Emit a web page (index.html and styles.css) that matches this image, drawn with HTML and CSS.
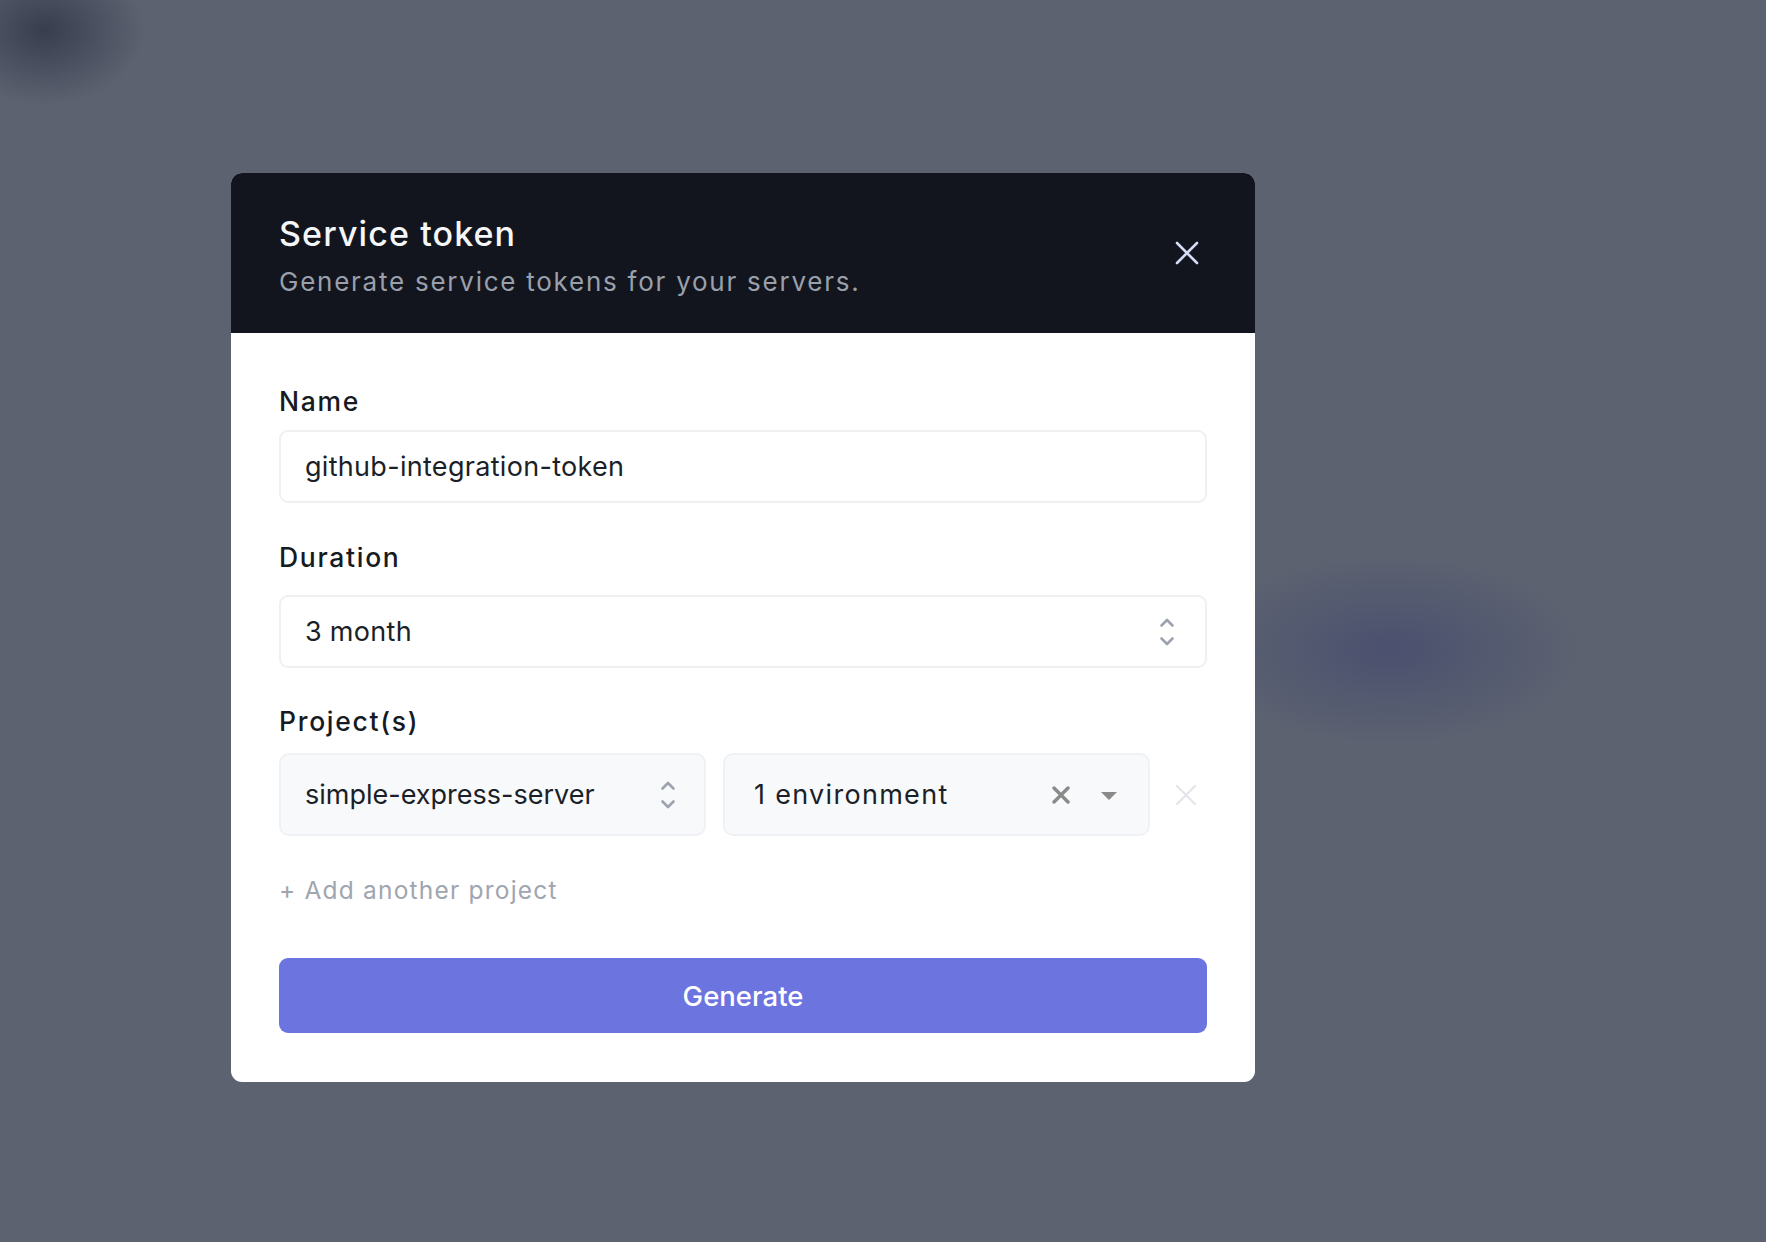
FILE: index.html
```html
<!DOCTYPE html>
<html lang="en">
<head>
<meta charset="utf-8">
<title>Service token</title>
<link rel="stylesheet" href="styles.css">
</head>
<body>
<div class="backdrop">
  <div class="modal">
    <header class="modal-header">
      <div class="header-text">
        <h1 class="title">Service token</h1>
        <p class="subtitle">Generate service tokens for your servers.</p>
      </div>
      <button class="close-btn" aria-label="Close">
        <svg width="26" height="26" viewBox="0 0 26 26"><path d="M3 3 L23 23 M23 3 L3 23" stroke="#d5dcf5" stroke-width="2.6" stroke-linecap="round"/></svg>
      </button>
    </header>
    <div class="modal-body">
      <div class="label label-name">Name</div>
      <div class="field field-name">github-integration-token</div>

      <div class="label label-duration">Duration</div>
      <div class="field field-duration">
        <span>3 month</span>
        <svg class="chev" width="16" height="30" viewBox="0 0 16 30"><path d="M2.5 8.5 L8 3 L13.5 8.5 M2.5 21.5 L8 27 L13.5 21.5" fill="none" stroke="#9ca3af" stroke-width="2.6" stroke-linecap="round" stroke-linejoin="round"/></svg>
      </div>

      <div class="label label-projects">Project(s)</div>
      <div class="project-row">
        <div class="pselect">
          <span>simple-express-server</span>
          <svg class="chev" width="16" height="30" viewBox="0 0 16 30"><path d="M2.5 8.5 L8 3 L13.5 8.5 M2.5 21.5 L8 27 L13.5 21.5" fill="none" stroke="#9ca3af" stroke-width="2.6" stroke-linecap="round" stroke-linejoin="round"/></svg>
        </div>
        <div class="pselect env">
          <span class="env-text">1 environment</span>
          <svg class="env-x" width="18" height="18" viewBox="0 0 18 18"><path d="M2 2 L16 16 M16 2 L2 16" stroke="#8a8a8a" stroke-width="3.4" stroke-linecap="round"/></svg>
          <svg class="env-caret" width="18" height="10" viewBox="0 0 18 10"><path d="M1 1 L17 1 L9 9 Z" fill="#8a8a8a"/></svg>
        </div>
        <svg class="remove-x" width="22" height="22" viewBox="0 0 22 22"><path d="M2 2 L20 20 M20 2 L2 20" stroke="#e4e6ea" stroke-width="2.4" stroke-linecap="round"/></svg>
      </div>

      <div class="add-project">+ Add another project</div>

      <button class="generate">Generate</button>
    </div>
  </div>
</div>
</body>
</html>
```
FILE: styles.css
```css
html, body {
  margin: 0;
  padding: 0;
  height: 100%;
}
body {
  font-family: Inter, "Noto Sans", "Liberation Sans", sans-serif;
  background-color: #5c6270;
  background-image:
    radial-gradient(ellipse 100px 75px at 45px 30px, rgba(52,58,74,0.9), rgba(52,58,74,0) 100%),
    radial-gradient(ellipse 190px 95px at 1390px 650px, rgba(70,76,110,0.8), rgba(70,76,110,0) 100%);
  overflow: hidden;
}
.backdrop {
  padding: 173px 0 0 231px;
}
.modal {
  width: 1024px;
  border-radius: 11px;
  overflow: hidden;
  background: #ffffff;
}
.modal-header {
  background: #12151e;
  height: 160px;
  box-sizing: border-box;
  padding: 0 48px;
  display: flex;
  align-items: flex-start;
  justify-content: space-between;
}
.header-text {
  padding-top: 41px;
}
.title {
  margin: 0;
  font-size: 34px;
  line-height: 40px;
  font-weight: 500;
  color: #f5f6f8;
  letter-spacing: 1.1px;
}
.subtitle {
  margin: 12px 0 0 0;
  font-size: 26px;
  line-height: 32px;
  color: #9aa0ab;
  letter-spacing: 1.75px;
}
.close-btn {
  margin-top: 67px;
  margin-right: 7px;
  background: none;
  border: none;
  padding: 0;
  width: 26px;
  height: 26px;
  display: flex;
}
.modal-body {
  padding: 52px 48px 49px 48px;
  display: flex;
  flex-direction: column;
}
.label {
  font-size: 26.5px;
  line-height: 32px;
  font-weight: 500;
  color: #161a22;
  letter-spacing: 1.7px;
}
.label-name { margin-bottom: 13px; }
.label-duration { margin-top: 38px; margin-bottom: 22px; }
.label-projects { margin-top: 37px; margin-bottom: 16px; }
.field {
  height: 73px;
  box-sizing: border-box;
  border: 2px solid #eef0f2;
  border-radius: 9px;
  padding: 0 24px;
  display: flex;
  align-items: center;
  justify-content: space-between;
  font-size: 27px;
  letter-spacing: 0.3px;
  color: #1b1f27;
}
.chev { flex: none; }
.field-duration .chev { margin-right: 6px; }
.project-row {
  display: flex;
  align-items: center;
  gap: 17px;
  height: 83px;
}
.pselect {
  width: 427px;
  height: 83px;
  box-sizing: border-box;
  background: #f8f9fb;
  border: 2px solid #eff1f4;
  border-radius: 10px;
  padding: 0 24px;
  display: flex;
  align-items: center;
  justify-content: space-between;
  font-size: 27px;
  letter-spacing: 0;
  color: #1b1f27;
}
.pselect .chev { margin-right: 4px; }
.env { padding-left: 29px; padding-right: 30px; }
.env-text { flex: 1; letter-spacing: 1.3px; }
.env-x { margin-right: 30px; }
.env-caret { margin-top: 2px; }
.remove-x { margin-left: 8px; }
.add-project {
  margin-top: 42px;
  font-size: 24.5px;
  line-height: 24px;
  color: #a0a5b0;
  letter-spacing: 1.2px;
}
.generate {
  margin-top: 56px;
  height: 75px;
  border: none;
  border-radius: 9px;
  background: #6b74df;
  color: #ffffff;
  font-family: Inter, "Noto Sans", "Liberation Sans", sans-serif;
  font-size: 27.5px;
  font-weight: 500;
  padding: 0;
}
```
